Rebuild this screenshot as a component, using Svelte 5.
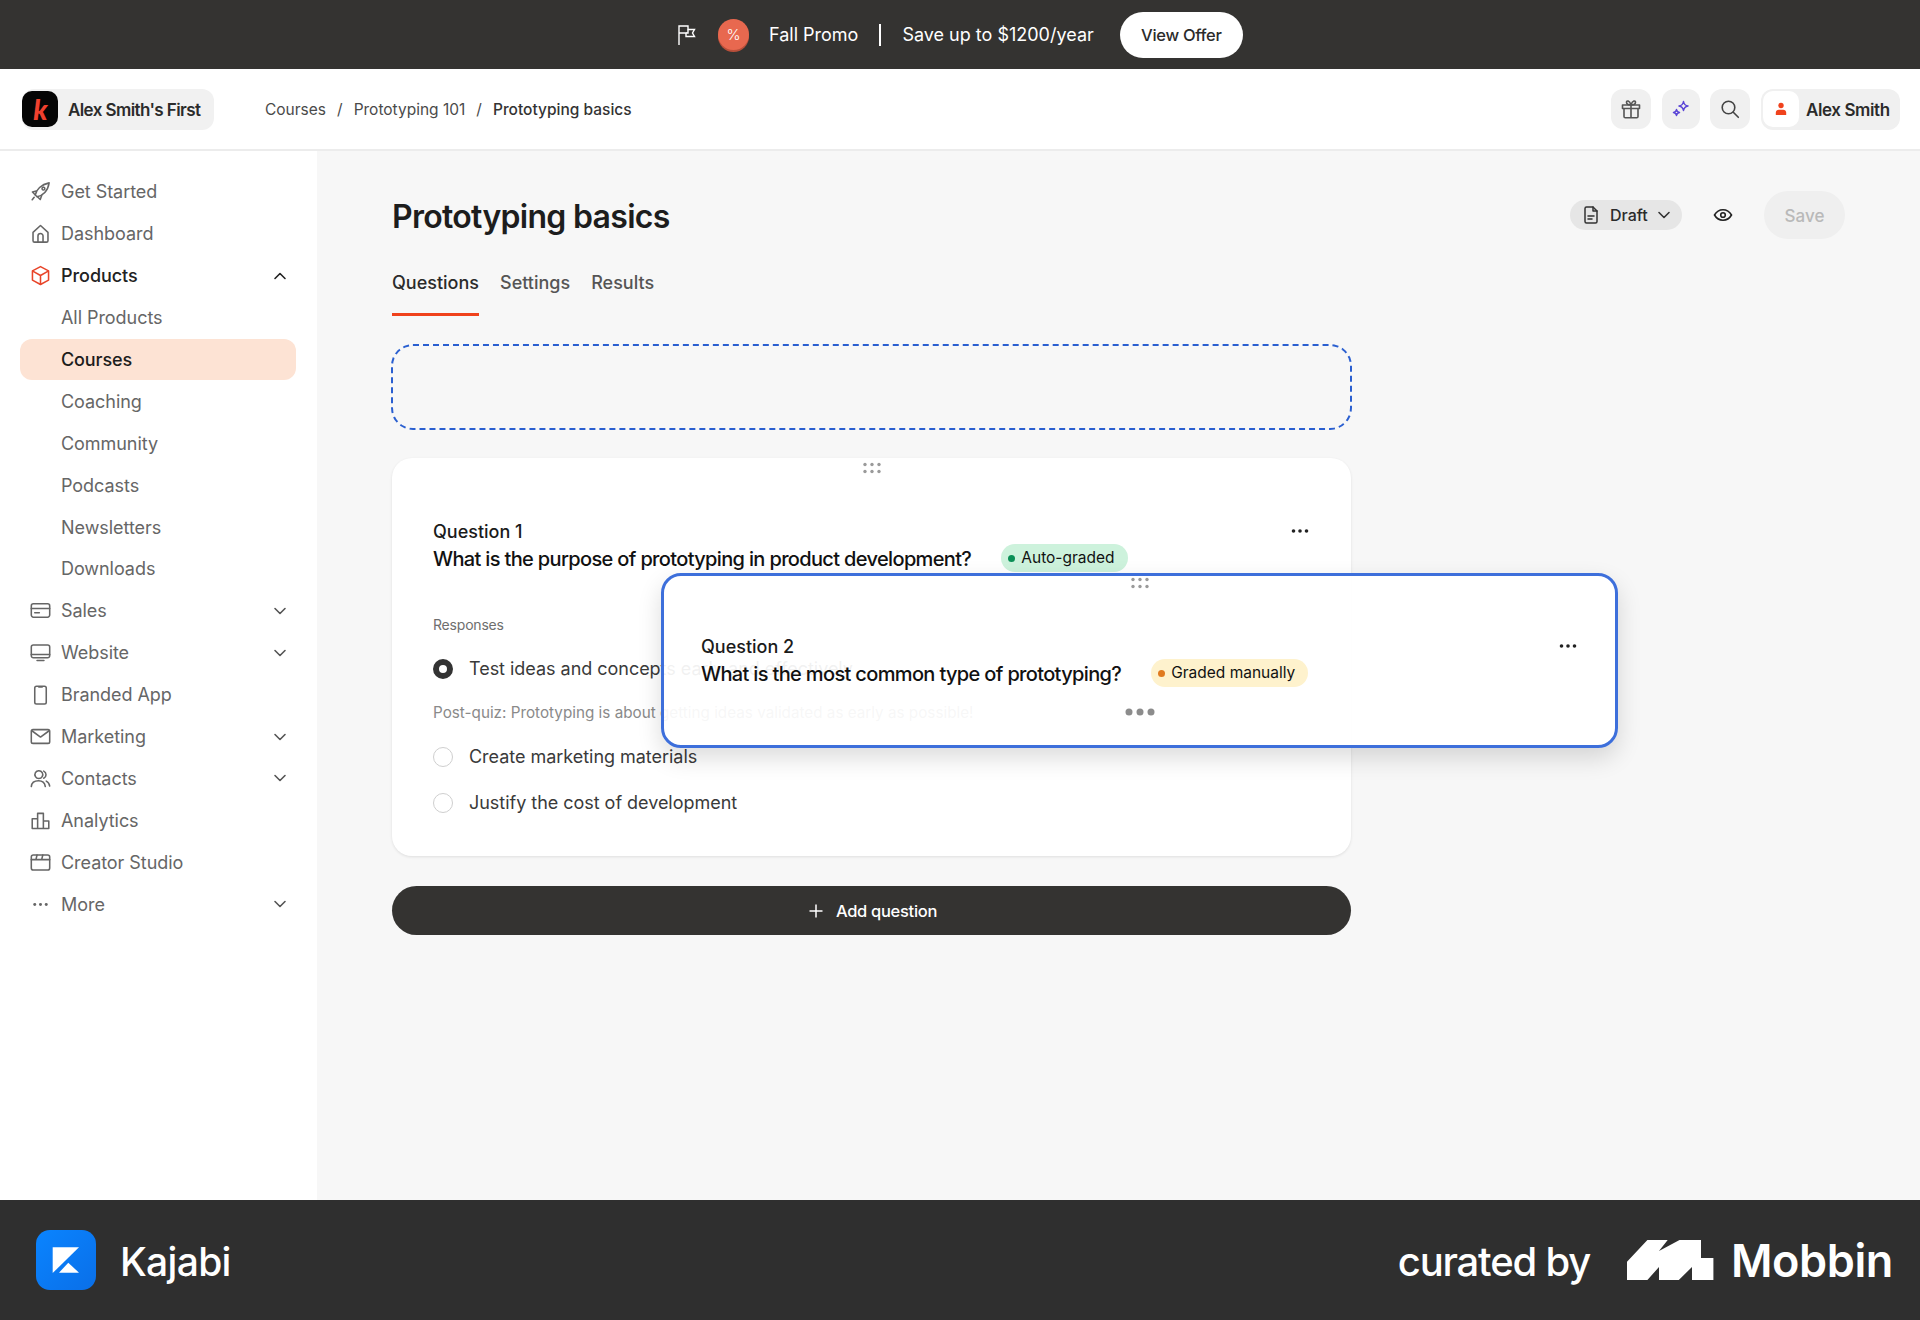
<script lang="ts">
	type NavItem = { label: string; icon?: string; chevron?: 'up' | 'down'; sub?: boolean; active?: boolean; current?: boolean }

	const icons: Record<string, string[]> = {
		rocket: ['M7 14.500 5.500 13C6.300 8.500 10.500 3.800 17.500 2.500 16.500 9.500 12 13.700 7 14.500Z', 'M12.500 6.300a1.200 1.200 0 1 0 .1 0', 'M6.300 9.500 3 10.500l2.500 2.500M11 13.500 9.800 17l-2.500-2.500', 'M4.500 15 2.800 17.200'],
		home: ['M3.500 9 10 3l6.500 6v7.200a1.300 1.300 0 0 1-1.300 1.300H4.800a1.300 1.300 0 0 1-1.300-1.300Z', 'M7.800 17.500v-5.300a2.200 2.200 0 0 1 4.400 0v5.300'],
		box: ['M10 2.300 17 6v8l-7 3.800L3 14V6Z', 'M3.300 6.200 10 10l6.700-3.800M10 10v7.600'],
		card: ['M2 6a1.800 1.800 0 0 1 1.800-1.800h12.400A1.800 1.800 0 0 1 18 6v8a1.800 1.800 0 0 1-1.800 1.800H3.800A1.800 1.800 0 0 1 2 14Z', 'M2 8.300h16M5 12h4'],
		monitor: ['M2 5.200a1.800 1.800 0 0 1 1.800-1.800h12.400A1.800 1.800 0 0 1 18 5.200v7.600a1.800 1.800 0 0 1-1.800 1.800H3.800A1.800 1.800 0 0 1 2 12.800Z', 'M2 11.800h16M7 17h6'],
		phone: ['M6.500 2.800h7a1.500 1.500 0 0 1 1.500 1.500v12.400a1.500 1.500 0 0 1-1.500 1.500h-7A1.500 1.500 0 0 1 5 16.700V4.300a1.500 1.500 0 0 1 1.500-1.500Z', 'M8.500 3.500h3'],
		mail: ['M2 5.500a1.500 1.500 0 0 1 1.500-1.500h13A1.500 1.500 0 0 1 18 5.500v9a1.500 1.500 0 0 1-1.500 1.500h-13A1.500 1.500 0 0 1 2 14.500Z', 'M2.500 5 10 10.500 17.500 5'],
		users: ['M8.500 3.200a3.400 3.400 0 1 0 .1 0', 'M2 17c.3-3 2.800-5 6.300-5 3.300 0 5.400 2 5.900 5', 'M12.800 3.600a3.400 3.400 0 0 1 0 6.200M15 12.300c1.600.8 2.700 2.300 3 4.300'],
		chart: ['M7.500 17V3.800h5V17M2.800 17V8.500h4.700M12.500 10.500h4.700V17H2.800'],
		studio: ['M2 5.300a1.800 1.800 0 0 1 1.800-1.800h12.400A1.800 1.800 0 0 1 18 5.300v9.400a1.800 1.800 0 0 1-1.800 1.800H3.800A1.800 1.800 0 0 1 2 14.700Z', 'M2 7.500h16M7 3.500l-1 4M12 3.500l-1 4']
	}

	const nav: NavItem[] = [
		{ label: 'Get Started', icon: 'rocket' },
		{ label: 'Dashboard', icon: 'home' },
		{ label: 'Products', icon: 'box', chevron: 'up', current: true },
		{ label: 'All Products', sub: true },
		{ label: 'Courses', sub: true, active: true },
		{ label: 'Coaching', sub: true },
		{ label: 'Community', sub: true },
		{ label: 'Podcasts', sub: true },
		{ label: 'Newsletters', sub: true },
		{ label: 'Downloads', sub: true },
		{ label: 'Sales', icon: 'card', chevron: 'down' },
		{ label: 'Website', icon: 'monitor', chevron: 'down' },
		{ label: 'Branded App', icon: 'phone' },
		{ label: 'Marketing', icon: 'mail', chevron: 'down' },
		{ label: 'Contacts', icon: 'users', chevron: 'down' },
		{ label: 'Analytics', icon: 'chart' },
		{ label: 'Creator Studio', icon: 'studio' },
		{ label: 'More', icon: 'more', chevron: 'down' }
	]

	const answers = [
		{ text: 'Test ideas and concepts early and effectively', checked: true, note: 'Post-quiz: Prototyping is about getting ideas validated as early as possible!' },
		{ text: 'Create marketing materials' },
		{ text: 'Justify the cost of development' }
	]
</script>

{#snippet dots()}
	<svg class="grip" width="20" height="12" viewBox="0 0 20 12" fill="#9a9a9a">
		<circle cx="3" cy="2.500" r="1.700" /><circle cx="10" cy="2.500" r="1.700" /><circle cx="17" cy="2.500" r="1.700" />
		<circle cx="3" cy="9.500" r="1.700" /><circle cx="10" cy="9.500" r="1.700" /><circle cx="17" cy="9.500" r="1.700" />
	</svg>
{/snippet}

{#snippet ellipsis()}
	<svg class="kebab" width="20" height="6" viewBox="0 0 20 6" fill="#222">
		<circle cx="3.500" cy="3" r="1.800" /><circle cx="10" cy="3" r="1.800" /><circle cx="16.500" cy="3" r="1.800" />
	</svg>
{/snippet}

<div class="page">
	<div class="banner">
		<svg width="20" height="22" viewBox="0 0 20 22" fill="none" stroke="#fff" stroke-width="1.400">
			<path d="M2 21V2h9v3.500h6.500L15.500 9l2 3.500H9V9H2" />
			<path d="M11 5.500V9H9" />
		</svg>
		<span class="promo-badge">%</span>
		<span class="promo-name">Fall Promo</span>
		<span class="promo-sep"></span>
		<span class="promo-save">Save up to $1200/year</span>
		<button class="offer">View Offer</button>
	</div>

	<header class="topbar">
		<div class="site">
			<span class="site-logo">k</span>
			<span class="site-name">Alex Smith's First</span>
		</div>
		<nav class="crumbs">
			<span>Courses</span><i>/</i><span>Prototyping 101</span><i>/</i><span class="crumb-now">Prototyping basics</span>
		</nav>
		<div class="tools">
			<button class="tool" aria-label="Gifts">
				<svg width="22" height="22" viewBox="0 0 22 22" fill="none" stroke="#555" stroke-width="1.600" stroke-linejoin="round">
					<path d="M2.500 7h17v3.500h-17ZM4 10.500v8a1.300 1.300 0 0 0 1.300 1.300h11.400a1.300 1.300 0 0 0 1.300-1.300v-8M11 7v12.800" />
					<path d="M11 7C9 7 6.500 6.500 6.500 4.300 6.500 2.500 9.500 2 11 7c1.500-5 4.500-4.500 4.500-2.700C15.500 6.500 13 7 11 7Z" />
				</svg>
			</button>
			<button class="tool narrow" aria-label="AI">
				<svg width="20" height="20" viewBox="0 0 20 20" fill="none" stroke="#5a45d6" stroke-width="1.500" stroke-linejoin="round">
					<path d="M12.500 2.500c.5 3 1.500 4 4.500 4.500-3 .5-4 1.500-4.500 4.500-.5-3-1.500-4-4.500-4.500 3-.5 4-1.500 4.500-4.500Z" />
					<path d="M5.500 10.500c.3 2 1 2.700 3 3-2 .3-2.700 1-3 3-.3-2-1-2.700-3-3 2-.3 2.700-1 3-3Z" />
				</svg>
			</button>
			<button class="tool" aria-label="Search">
				<svg width="22" height="22" viewBox="0 0 22 22" fill="none" stroke="#444" stroke-width="1.600" stroke-linecap="round">
					<circle cx="9.500" cy="9.500" r="6.300" /><path d="m14.300 14.300 5 5" />
				</svg>
			</button>
			<div class="user">
				<span class="avatar">
					<svg width="14" height="14" viewBox="0 0 14 14" fill="#f0421c">
						<circle cx="7" cy="3.500" r="2.700" /><path d="M1.800 13v-2.300c0-1.700 1.300-3 3-3h4.400c1.700 0 3 1.300 3 3V13Z" />
					</svg>
				</span>
				<span class="user-name">Alex Smith</span>
			</div>
		</div>
	</header>

	<div class="body">
		<aside class="sidebar">
			{#each nav as item}
				<div class="item" class:sub={item.sub} class:active={item.active} class:current={item.current}>
					{#if item.icon === 'more'}
						<svg class="icon" viewBox="0 0 20 20" fill="#666">
							<circle cx="5" cy="10" r="1.300" /><circle cx="10" cy="10" r="1.300" /><circle cx="15" cy="10" r="1.300" />
						</svg>
					{:else if item.icon}
						<svg class="icon" viewBox="0 0 20 20" fill="none" stroke={item.current ? '#e8452a' : '#666'} stroke-width="1.350" stroke-linejoin="round" stroke-linecap="round">
							{#each icons[item.icon] as d}
								<path {d} />
							{/each}
						</svg>
					{/if}
					<span class="label">{item.label}</span>
					{#if item.chevron}
						<svg class="chev" width="14" height="14" viewBox="0 0 14 14" fill="none" stroke={item.current ? '#222' : '#555'} stroke-width="1.600" stroke-linecap="round" stroke-linejoin="round">
							<path d={item.chevron === 'up' ? 'M2 9.500 7 4.500l5 5' : 'M2 4.500l5 5 5-5'} />
						</svg>
					{/if}
				</div>
			{/each}
		</aside>

		<main class="main">
			<div class="title-row">
				<h1>Prototyping basics</h1>
				<div class="actions">
					<div class="status">
						<svg width="20" height="20" viewBox="0 0 20 20" fill="none" stroke="#333" stroke-width="1.500" stroke-linejoin="round" stroke-linecap="round">
							<path d="M4 3.500A1.500 1.500 0 0 1 5.500 2H12l4 4v10.500a1.500 1.500 0 0 1-1.500 1.500h-9A1.500 1.500 0 0 1 4 16.500Z" />
							<path d="M12 2v4h4M7 11h6M7 14h4" />
						</svg>
						<span>Draft</span>
						<svg width="14" height="14" viewBox="0 0 14 14" fill="none" stroke="#333" stroke-width="1.600" stroke-linecap="round" stroke-linejoin="round">
							<path d="M2 4.500l5 5 5-5" />
						</svg>
					</div>
					<svg class="eye" width="20" height="20" viewBox="0 0 20 20" fill="none" stroke="#222" stroke-width="1.600">
						<path d="M1.500 10C3.500 6.500 6.500 4.800 10 4.800s6.500 1.700 8.500 5.200c-2 3.500-5 5.200-8.500 5.200S3.500 13.500 1.500 10Z" />
						<circle cx="10" cy="10" r="2.300" />
					</svg>
					<button class="save">Save</button>
				</div>
			</div>

			<div class="tabs">
				<span class="tab on">Questions</span>
				<span class="tab">Settings</span>
				<span class="tab">Results</span>
			</div>

			<div class="column">
				<div class="dropzone"></div>

				<section class="question">
					{@render dots()}
					<div class="q-head">
						<div>
							<div class="q-num">Question 1</div>
							<div class="q-title">
								What is the purpose of prototyping in product development?
								<span class="tag green"><b></b>Auto-graded</span>
							</div>
						</div>
						{@render ellipsis()}
					</div>
					<div class="resp-label">Responses</div>
					{#each answers as a}
						<div class="answer">
							<span class="radio" class:checked={a.checked}></span>
							<span>{a.text}</span>
						</div>
						{#if a.note}
							<div class="note">{a.note}</div>
						{/if}
					{/each}
				</section>

				<section class="question dragging">
					{@render dots()}
					<div class="q-head">
						<div>
							<div class="q-num">Question 2</div>
							<div class="q-title">
								What is the most common type of prototyping?
								<span class="tag yellow"><b></b>Graded manually</span>
							</div>
						</div>
						{@render ellipsis()}
					</div>
					<svg class="loading" width="32" height="10" viewBox="0 0 32 10" fill="#8c8c8c">
						<circle cx="5" cy="5" r="3.500" /><circle cx="16" cy="5" r="3.500" /><circle cx="27" cy="5" r="3.500" />
					</svg>
				</section>

				<button class="add">
					<svg width="16" height="16" viewBox="0 0 16 16" stroke="#fff" stroke-width="1.500"><path d="M8 1.500v13M1.500 8h13" /></svg>
					Add question
				</button>
			</div>
		</main>
	</div>

	<footer class="footer">
		<div class="brand">
			<span class="brand-icon">
				<svg width="60" height="60" viewBox="0 0 60 60" fill="#fff">
					<path d="M16.700 17.300H43L16.700 43Z" /><path d="M32.300 32.700 43 42.700H23Z" />
				</svg>
			</span>
			<span class="brand-name">Kajabi</span>
		</div>
		<div class="curated">
			<span class="curated-by">curated by</span>
			<svg width="87" height="40" viewBox="0 0 87 40" fill="#fff">
				<path d="M20.400 0H40.700L32 11 52.500 0H74V18H86.400V40H65V27L51.800 40H32V27L20.400 40H0V21.700Z" />
			</svg>
			<span class="mobbin">Mobbin</span>
		</div>
	</footer>
</div>

<style>
	:global(body) {
		margin: 0;
		font-family: Inter, 'Liberation Sans', sans-serif;
		color: #2b2b2b;
	}
	button {
		font-family: inherit;
		border: 0;
		cursor: pointer;
	}
	.page {
		width: 1920px;
		height: 1320px;
		display: flex;
		flex-direction: column;
		overflow: hidden;
	}

	.banner {
		height: 69px;
		background: #343331;
		color: #fff;
		display: flex;
		align-items: center;
		padding-left: 677px;
		font-size: 18px;
	}
	.promo-badge {
		width: 31px;
		height: 31px;
		margin-left: 21px;
		border-radius: 50%;
		background: #e8684f;
		box-shadow: 0 2px 0 #b94f3a;
		display: flex;
		align-items: center;
		justify-content: center;
		font-size: 15px;
		font-weight: 300;
	}
	.promo-name {
		margin-left: 20px;
	}
	.promo-sep {
		width: 2px;
		height: 22px;
		background: #fff;
		margin: 0 21px 0 21px;
	}
	.offer {
		margin-left: 26px;
		width: 123px;
		height: 46px;
		border-radius: 23px;
		background: #fff;
		color: #2b2b2b;
		font-size: 16.500px;
		font-weight: 500;
		letter-spacing: -0.3px;
	}

	.topbar {
		height: 80px;
		background: #fff;
		border-bottom: 2px solid #ececec;
		display: flex;
		align-items: center;
		padding: 0 20px 0 22px;
	}
	.site {
		width: 192px;
		height: 41px;
		box-sizing: border-box;
		border-radius: 12px;
		background: #f1f1f1;
		display: flex;
		align-items: center;
		gap: 10px;
		font-size: 17px;
		font-weight: 600;
		letter-spacing: -0.6px;
	}
	.site-name {
		padding-top: 2px;
	}
	.site-logo {
		width: 36px;
		height: 36px;
		border-radius: 10px;
		background: #050505;
		color: #f0402e;
		display: flex;
		align-items: center;
		justify-content: center;
		font-family: Lato, sans-serif;
		font-size: 28px;
		font-weight: 900;
		font-style: italic;
		line-height: 1;
	}
	.crumbs {
		margin-left: 51px;
		display: flex;
		align-items: center;
		font-size: 15.500px;
		color: #4a4a4a;
	}
	.crumbs i {
		font-style: normal;
		margin: 0 11px;
	}
	.crumb-now {
		color: #333;
		font-weight: 500;
	}
	.tools {
		margin-left: auto;
		display: flex;
		align-items: center;
		gap: 10px;
	}
	.tool {
		width: 40px;
		height: 40px;
		border-radius: 12px;
		background: #f0f0f0;
		display: flex;
		align-items: center;
		justify-content: center;
		padding: 0;
	}
	.tool.narrow {
		width: 38px;
		margin-left: 1px;
	}
	.user {
		width: 139px;
		height: 41px;
		margin-left: 1px;
		border-radius: 12px;
		background: #f0f0f0;
		display: flex;
		align-items: center;
		gap: 7px;
		padding-left: 2px;
		box-sizing: border-box;
		font-size: 17px;
		font-weight: 600;
		letter-spacing: -0.4px;
	}
	.user-name {
		padding-top: 1px;
	}
	.avatar {
		width: 36px;
		height: 36px;
		border-radius: 10px;
		background: #fff;
		display: flex;
		align-items: center;
		justify-content: center;
	}

	.body {
		flex: 1;
		display: flex;
		min-height: 0;
	}
	.sidebar {
		width: 317px;
		box-sizing: border-box;
		background: #fff;
		padding: 20px 21px 0 20px;
		display: flex;
		flex-direction: column;
	}
	.item {
		height: 41.900px;
		flex: none;
		display: flex;
		align-items: center;
		padding: 0 9px 0 10px;
		gap: 11px;
		border-radius: 12px;
		font-size: 18px;
		color: #666;
		letter-spacing: -0.05px;
	}
	.item.sub {
		padding-left: 41px;
	}
	.item.active {
		background: #fde3d4;
		color: #1c1c1c;
		font-weight: 500;
		letter-spacing: -0.1px;
	}
	.item.current {
		color: #222;
		font-weight: 500;
	}
	.icon {
		width: 23px;
		height: 23px;
		margin: 0 -1.500px;
		flex: none;
	}
	.chev {
		margin-left: auto;
	}

	.main {
		flex: 1;
		background: #f7f7f7;
		padding: 40px 75px 0;
	}
	.title-row {
		display: flex;
		align-items: center;
		justify-content: space-between;
		height: 48px;
	}
	h1 {
		margin: 0;
		padding-top: 2px;
		font-size: 32px;
		font-weight: 600;
		letter-spacing: -0.7px;
		color: #1d1d1d;
	}
	.actions {
		display: flex;
		align-items: center;
	}
	.status {
		width: 112px;
		height: 30px;
		box-sizing: border-box;
		border-radius: 15px;
		background: #e6e6e6;
		display: flex;
		align-items: center;
		padding-left: 11px;
		font-size: 16px;
		font-weight: 500;
		gap: 9px;
	}
	.eye {
		margin: 0 31px 0 31px;
	}
	.save {
		width: 81px;
		height: 48px;
		border-radius: 24px;
		padding-top: 3px;
		background: #efefef;
		color: #b9b9b9;
		font-size: 17px;
		font-weight: 500;
	}

	.tabs {
		margin-top: 28px;
		display: flex;
		gap: 21px;
		font-size: 18px;
		color: #555;
		font-weight: 500;
	}
	.tab {
		height: 49px;
		box-sizing: border-box;
		padding-top: 5px;
	}
	.tab.on {
		color: #2b2b2b;
		border-bottom: 3px solid #f0421c;
	}

	.column {
		position: relative;
		width: 959px;
		margin-top: 28px;
		display: flex;
		flex-direction: column;
	}
	.dropzone {
		height: 86px;
		box-sizing: border-box;
		border: 2.500px dashed #2a5fd0;
		border-radius: 22px;
		margin: 0 -1px;
	}
	.question {
		position: relative;
		margin-top: 28px;
		height: 398px;
		box-sizing: border-box;
		padding: 61px 41px 0;
		background: #fff;
		border-radius: 20px;
		box-shadow: 0 1px 3px rgba(0, 0, 0, 0.1);
	}
	.grip {
		position: absolute;
		top: 4px;
		left: 50%;
		margin-left: -10px;
	}
	.q-head {
		display: flex;
		justify-content: space-between;
		align-items: flex-start;
	}
	.kebab {
		margin-top: 9px;
		margin-right: 0;
	}
	.q-num {
		font-size: 18px;
		font-weight: 500;
		line-height: 25px;
		color: #1b1b1b;
	}
	.q-title {
		display: flex;
		align-items: center;
		font-size: 20px;
		font-weight: 500;
		letter-spacing: -0.65px;
		line-height: 30px;
		color: #111;
	}
	.tag {
		margin-left: 30px;
		height: 28px;
		margin-top: -2px;
		padding: 0 13px 0 7px;
		border-radius: 14px;
		display: inline-flex;
		align-items: center;
		gap: 6px;
		font-size: 15.500px;
		letter-spacing: 0;
		font-weight: 400;
	}
	.tag b {
		width: 7px;
		height: 7px;
		border-radius: 50%;
	}
	.green {
		background: #cdf2dc;
	}
	.green b {
		background: #0a8f56;
	}
	.yellow {
		background: #fef2cd;
	}
	.yellow b {
		background: #e07a1f;
	}
	.resp-label {
		margin-top: 42px;
		font-size: 14px;
		line-height: 17px;
		color: #6e6e6e;
		letter-spacing: -0.2px;
	}
	.answer {
		display: flex;
		align-items: center;
		gap: 16px;
		height: 28px;
		margin-top: 18px;
		font-size: 18px;
		letter-spacing: -0.03px;
		color: #3a3a3a;
	}
	.resp-label + .answer {
		margin-top: 21.500px;
	}
	.radio {
		width: 20px;
		height: 20px;
		box-sizing: border-box;
		border-radius: 50%;
		border: 1.500px solid #cfcfcf;
		background: #fff;
	}
	.radio.checked {
		border: 6.500px solid #333;
	}
	.note {
		margin-top: 18px;
		font-size: 15.250px;
		color: #8a8a8a;
		line-height: 24px;
	}

	.question.dragging {
		position: absolute;
		left: 269px;
		top: 229px;
		width: 957px;
		height: 175px;
		margin: 0;
		padding: 58px 37px 0;
		background: rgba(255, 255, 255, 0.93);
		border: 3px solid #3d6fdb;
		box-shadow: 0 10px 24px rgba(0, 0, 0, 0.14);
		z-index: 2;
	}
	.dragging .grip {
		top: 1px;
	}
	.loading {
		position: absolute;
		left: 50%;
		top: 131px;
		margin-left: -16px;
	}

	.add {
		margin-top: 30px;
		height: 49px;
		border-radius: 25px;
		background: #343331;
		color: #fff;
		font-size: 16.500px;
		font-weight: 500;
		letter-spacing: -0.3px;
		display: flex;
		align-items: center;
		justify-content: center;
		gap: 12px;
		padding-left: 8px;
	}

	.footer {
		height: 120px;
		flex: none;
		background: #2f2f2f;
		color: #fff;
		display: flex;
		align-items: center;
		justify-content: space-between;
		padding: 0 27px 0 36px;
	}
	.brand {
		display: flex;
		align-items: center;
		gap: 24px;
	}
	.brand-icon {
		width: 60px;
		height: 60px;
		border-radius: 14px;
		background: linear-gradient(135deg, #0a84ff, #0a6fe8);
		display: block;
		overflow: hidden;
	}
	.brand-icon svg {
		display: block;
	}
	.brand-name {
		font-size: 39px;
		font-weight: 500;
		letter-spacing: -0.7px;
		padding-top: 2px;
	}
	.curated {
		display: flex;
		align-items: center;
	}
	.curated-by {
		font-size: 40px;
		font-weight: 500;
		letter-spacing: -1.200px;
		margin-right: 37px;
		padding-top: 2px;
	}
	.mobbin {
		font-size: 45px;
		font-weight: 600;
		margin-left: 17px;
		letter-spacing: -0.4px;
	}
</style>
